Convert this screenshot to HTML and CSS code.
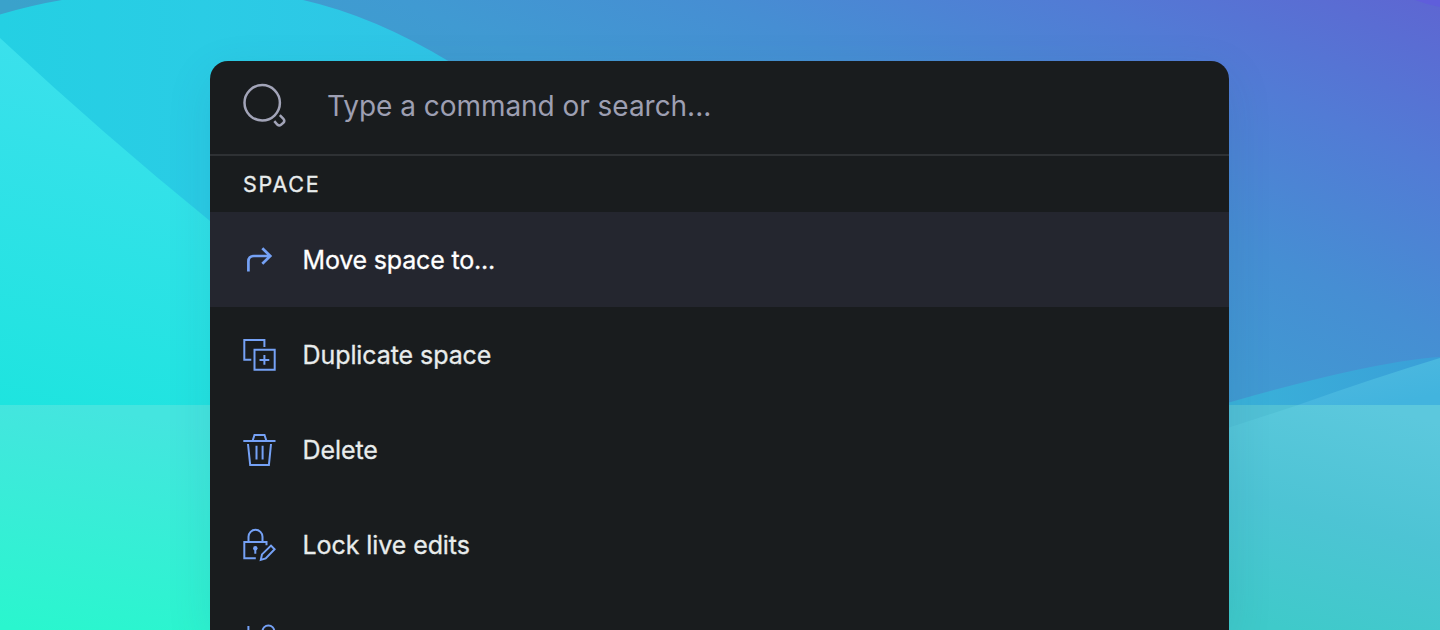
FILE: index.html
```html
<!DOCTYPE html>
<html lang="en">
<head>
<meta charset="utf-8">
<title>Command palette</title>
<link rel="stylesheet" href="styles.css">
</head>
<body>
<svg class="wallpaper" viewBox="0 0 1440 630" preserveAspectRatio="none" aria-hidden="true">
  <defs>
    <linearGradient id="sky" gradientUnits="userSpaceOnUse" x1="0" y1="0" x2="258" y2="-552">
      <stop offset="0" stop-color="#3aa2cb"/><stop offset=".28" stop-color="#409ad2"/><stop offset=".5" stop-color="#468ed3"/><stop offset=".75" stop-color="#527bd5"/><stop offset="1" stop-color="#5e66d2"/>
    </linearGradient>
    <linearGradient id="arc" gradientUnits="userSpaceOnUse" x1="0" y1="60" x2="450" y2="60">
      <stop offset="0" stop-color="#24d0e3"/><stop offset=".45" stop-color="#2acce5"/><stop offset="1" stop-color="#30c4e6"/>
    </linearGradient>
    <linearGradient id="slope" gradientUnits="userSpaceOnUse" x1="90" y1="60" x2="0" y2="405">
      <stop offset="0" stop-color="#3be0ec"/><stop offset="1" stop-color="#1ee4df"/>
    </linearGradient>
    <linearGradient id="shore" gradientUnits="userSpaceOnUse" x1="60" y1="405" x2="30" y2="630">
      <stop offset="0" stop-color="#44e5df"/><stop offset="1" stop-color="#2af6ce"/>
    </linearGradient>
    <linearGradient id="hill" gradientUnits="userSpaceOnUse" x1="1229" y1="400" x2="1440" y2="360">
      <stop offset="0" stop-color="#39b2d9"/><stop offset="1" stop-color="#3a9fd8"/>
    </linearGradient>
    <linearGradient id="ridge" gradientUnits="userSpaceOnUse" x1="1380" y1="360" x2="1390" y2="405">
      <stop offset="0" stop-color="#4cb8df"/><stop offset="1" stop-color="#42b4de"/>
    </linearGradient>
    <linearGradient id="sea" gradientUnits="userSpaceOnUse" x1="1350" y1="400" x2="1290" y2="630">
      <stop offset="0" stop-color="#5cc8dd"/><stop offset=".5" stop-color="#4dc4d4"/><stop offset="1" stop-color="#3fcaca"/>
    </linearGradient>
  </defs>
  <rect width="1440" height="630" fill="url(#sky)"/>
  <path d="M1415 0Q1428 5 1440 7V0Z" fill="#5f5edb"/>
  <path d="M0 14.500Q32 5 62 0H303Q374 16 450 62L700 250V405H0Z" fill="url(#arc)"/>
  <path d="M0 38Q104 135 210 221L400 405H0Z" fill="url(#slope)"/>
  <rect y="405" width="720" height="225" fill="url(#shore)"/>
  <path d="M1220 405L1229 402.500Q1374 361 1440 357V405Z" fill="url(#hill)"/>
  <path d="M1298 405Q1374 378 1440 358V405Z" fill="url(#ridge)"/>
  <rect x="720" y="405" width="720" height="225" fill="url(#sea)"/>
  <path d="M1220 405H1298L1229 427.500H1220Z" fill="#51c0d5"/>
</svg>

<main class="palette">
  <header class="search">
    <svg class="search-icon" viewBox="0 0 46 46">
      <circle cx="20.200" cy="19.800" r="17.700"/>
      <path d="M37.800 32.100L41.200 35.500C42.600 37 42.600 38.400 41.500 39.700L39 41.800C37.700 42.800 36.500 42.600 35.300 41.500L32.300 38.200"/>
    </svg>
    <span class="placeholder">Type a command or search...</span>
  </header>
  <h2 class="group">SPACE</h2>
  <ul class="commands">
    <li class="command active">
      <svg class="icon bold" viewBox="8 8 33 33"><path d="M13.400 36.500V26.500Q13.400 21 18.900 21H35M27.300 13.200L35.300 21L27.300 28.800"/></svg>
      <span class="label">Move space to...</span>
    </li>
    <li class="command">
      <svg class="icon" viewBox="8 8 33 33"><path d="M16.300 29.800H9.300V10H29.400V17M19.500 19.800H39.700V39.700H19.500ZM29.400 25V34.800M24.500 29.900H34.300"/></svg>
      <span class="label">Duplicate space</span>
    </li>
    <li class="command">
      <svg class="icon" viewBox="8 8 33 33"><path d="M8.300 15.900H40.500M17.700 15.500L19.500 9.900H29.500L31.300 15.500M13 19L15.200 40H33.900L36 19M21.500 20.700V34.500M27.600 20.700V34.500"/></svg>
      <span class="label">Delete</span>
    </li>
    <li class="command">
      <svg class="icon" viewBox="8 8 33 33"><path d="M13.500 21.500V16.800A7 7 0 0 1 27.500 16.800V21.500M20.800 38.200H9.300V21.900H31.500V25.300M20.300 29V33.800M25.800 39.900L27 34.400L36 25.600L39.600 29.300L30.700 38.400Z"/><circle class="dot" cx="20.300" cy="28.300" r="2.200"/></svg>
      <span class="label">Lock live edits</span>
    </li>
    <li class="command">
      <svg class="icon" viewBox="8 8 33 33"><path d="M13.400 11V21.500M27.500 24V16.300A5.900 5.900 0 0 1 39.300 16.300V24"/></svg>
    </li>
  </ul>
</main>
</body>
</html>
```

FILE: styles.css
```css
* { box-sizing: border-box; }
body {
  margin: 0;
  height: 630px;
  overflow: hidden;
  font-family: Inter, "Liberation Sans", sans-serif;
  -webkit-font-smoothing: antialiased;
}
/* Decorative backdrop behind the palette */
.wallpaper {
  position: absolute;
  inset: 0;
  width: 1440px;
  height: 630px;
  z-index: -1;
}
.palette {
  width: 1019px;
  height: 569px;
  margin: 61px 0 0 210px;
  border-radius: 18px 18px 0 0;
  overflow: hidden;
  background: #191c1e;
  box-shadow: 0 14px 46px rgba(30, 80, 120, .12);
}
.search {
  display: flex;
  align-items: center;
  gap: 39px;
  height: 95px;
  padding: 0 32px 4px;
  border-bottom: 2px solid #2e3134;
}
.search-icon {
  width: 46px;
  height: 46px;
  fill: none;
  stroke: #a2a4b8;
  stroke-width: 2.500;
}
.placeholder {
  font-size: 28px;
  letter-spacing: -.04px;
  color: #9d9fb2;
  white-space: nowrap;
}
.group {
  height: 56px;
  margin: 0;
  padding-left: 33px;
  font-size: 21.500px;
  line-height: 56px;
  font-weight: 400;
  letter-spacing: 1.750px;
  -webkit-text-stroke: .3px currentColor;
  color: #e8ecec;
}
.commands {
  margin: 0;
  padding: 0;
  list-style: none;
}
.command {
  display: flex;
  align-items: center;
  gap: 26.500px;
  height: 95px;
  padding-left: 33px;
  color: #e8ecec;
}
.command.active {
  background: #24262f;
  color: #fff;
}
.icon {
  flex: none;
  width: 33px;
  height: 33px;
  overflow: visible;
  fill: none;
  stroke: #75a1f5;
  stroke-width: 2;
}
.icon.bold { stroke-width: 2.700; }
.icon .dot { fill: #75a1f5; stroke: none; }
.label {
  font-size: 25px;
  font-weight: 400;
  letter-spacing: -.08px;
  -webkit-text-stroke: .3px currentColor;
  white-space: nowrap;
}
.active .label { letter-spacing: -.18px; }
```
